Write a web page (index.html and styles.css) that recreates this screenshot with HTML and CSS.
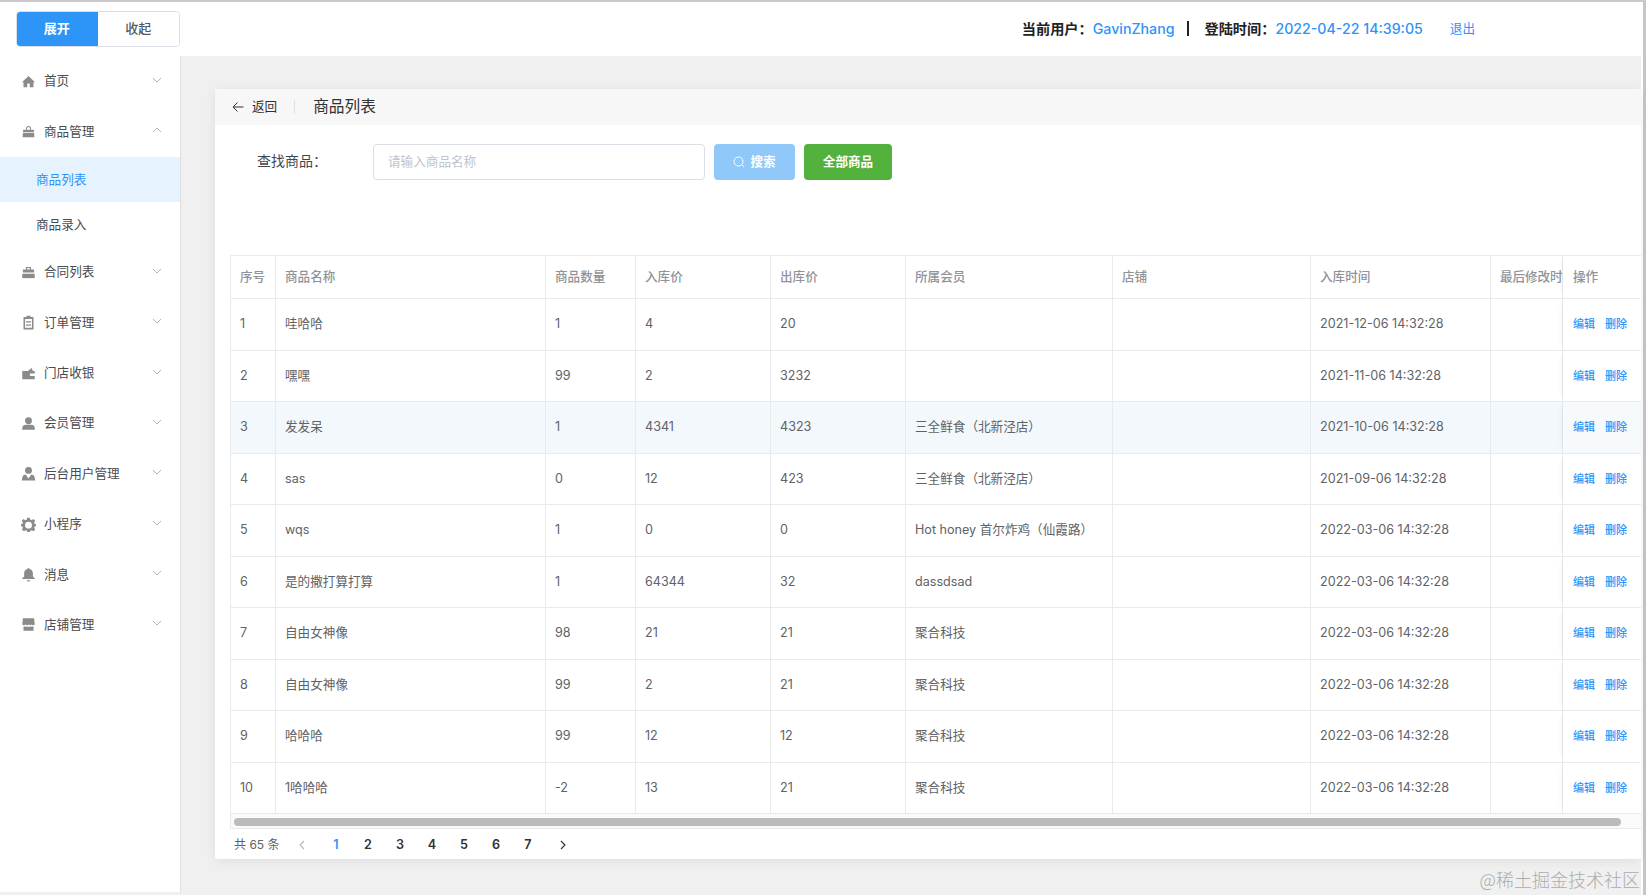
FILE: index.html
```html
<!DOCTYPE html>
<html lang="zh-CN">
<head>
<meta charset="utf-8">
<title>商品列表</title>
<link rel="stylesheet" href="styles.css">
</head>
<body>
<div class="window">
  <header class="topbar">
    <div class="toggle"><button class="toggle-btn on">展开</button><button class="toggle-btn">收起</button></div>
    <div class="userinfo">
      <span class="ui-label">当前用户：</span><span class="ui-value">GavinZhang</span>
      <span class="ui-sep"></span>
      <span class="ui-label">登陆时间：</span><span class="ui-value">2022-04-22 14:39:05</span>
      <a class="ui-logout">退出</a>
    </div>
  </header>
  <div class="layout">
    <nav class="sidebar">
      <div class="menu-item"><svg class="mi" viewBox="0 0 24 24"><path d="M12 3 1.500 13H4v8h6v-6h4v6h6v-8h2.500z"/></svg><span>首页</span><svg class="chev" viewBox="0 0 10 6"><path d="M1 1l4 4 4-4"/></svg></div>
      <div class="menu-item"><svg class="mi" viewBox="0 0 24 24"><path d="M8 9V7a4 4 0 0 1 8 0v2h-1.600V7a2.400 2.400 0 0 0-4.800 0v2z"/><path d="M3.500 9h17l1 12h-19zM3.200 13v1.400h17.600V13z" fill-rule="evenodd"/></svg><span>商品管理</span><svg class="chev" viewBox="0 0 10 6"><path d="M1 5l4-4 4 4"/></svg></div>
      <div class="submenu">
        <div class="sub-item active">商品列表</div>
        <div class="sub-item">商品录入</div>
      </div>
      <div class="menu-item"><svg class="mi" viewBox="0 0 24 24"><path fill-rule="evenodd" d="M8 3h8v4h5v5H3V7h5zm2 1.800V7h4V4.800z"/><path d="M2 14h20v7H2z"/></svg><span>合同列表</span><svg class="chev" viewBox="0 0 10 6"><path d="M1 1l4 4 4-4"/></svg></div>
      <div class="menu-item"><svg class="mi" viewBox="0 0 24 24"><path fill-rule="evenodd" d="M9 1h6v2h5v20H4V3h5zM6.500 6.500v14h11v-14zM8 10h8v2H8zm0 5h8v2H8z"/></svg><span>订单管理</span><svg class="chev" viewBox="0 0 10 6"><path d="M1 1l4 4 4-4"/></svg></div>
      <div class="menu-item"><svg class="mi" viewBox="0 0 24 24"><path fill-rule="evenodd" d="M2 8h9l6-5 2 5h3v4h-6a2 2 0 0 0 0 4h6v5H2z"/></svg><span>门店收银</span><svg class="chev" viewBox="0 0 10 6"><path d="M1 1l4 4 4-4"/></svg></div>
      <div class="menu-item"><svg class="mi" viewBox="0 0 24 24"><circle cx="12" cy="7.500" r="5.500"/><path d="M2 22v-3c0-3 3-5 6-5h8c3 0 6 2 6 5v3z"/></svg><span>会员管理</span><svg class="chev" viewBox="0 0 10 6"><path d="M1 1l4 4 4-4"/></svg></div>
      <div class="menu-item"><svg class="mi" viewBox="0 0 24 24"><circle cx="12" cy="7" r="5.500"/><path d="M1 23l1.500-6c.6-2 2.500-3.500 5-3.500L12 20l4.500-6.500c2.500 0 4.400 1.500 5 3.500l1.500 6z"/></svg><span>后台用户管理</span><svg class="chev" viewBox="0 0 10 6"><path d="M1 1l4 4 4-4"/></svg></div>
      <div class="menu-item"><svg class="mi" viewBox="0 0 24 24"><path fill-rule="evenodd" d="M10 1h4l.7 3 2.300 1 2.800-1.800 2.800 2.800L21 8.800l1 2.200 2 .5v3l-2 .5-1 2.200 1.800 2.800-2.800 2.800-2.800-1.800-2.300 1-.7 2h-4l-.7-2-2.300-1-2.800 1.800-2.800-2.800L3 17.200l-1-2.200-2-.5v-3l2-.5 1-2.200-1.800-2.800L4 3.200 6.800 5 9.300 4zM12 7.500a5.500 5.500 0 1 0 0 11 5.500 5.500 0 0 0 0-11z"/></svg><span>小程序</span><svg class="chev" viewBox="0 0 10 6"><path d="M1 1l4 4 4-4"/></svg></div>
      <div class="menu-item"><svg class="mi" viewBox="0 0 24 24"><path d="M10.500 3a1.500 1.500 0 0 1 3 0c3.500.8 5.500 3.500 5.500 7v5l3 3v1H2v-1l3-3v-5c0-3.500 2-6.200 5.500-7zM9 21h6a3 2 0 0 1-6 0z"/></svg><span>消息</span><svg class="chev" viewBox="0 0 10 6"><path d="M1 1l4 4 4-4"/></svg></div>
      <div class="menu-item"><svg class="mi" viewBox="0 0 24 24"><path d="M3 2h18l1 10c-2 2-4 1-5 0-1.500 1.500-3.500 1.500-5 0-1.500 1.500-3.500 1.500-5 0-1 1-3 2-5 0z"/><path d="M4 15c1 .5 2.500.5 3.500 0 1.500 1 3 1 4.500 0 1.500 1 3 1 4.500 0 1 .5 2.500.5 3.500 0v7H4z"/></svg><span>店铺管理</span><svg class="chev" viewBox="0 0 10 6"><path d="M1 1l4 4 4-4"/></svg></div>
    </nav>
    <main class="main">
      <section class="card">
        <div class="page-head">
          <svg class="back-arrow" viewBox="0 0 12 12"><path d="M11.500 6H1M5.500 1.500 1 6l4.500 4.500"/></svg>
          <span class="back-text">返回</span>
          <span class="head-div"></span>
          <span class="head-title">商品列表</span>
        </div>
        <div class="search">
          <label class="search-label">查找商品：</label>
          <input class="search-input" placeholder="请输入商品名称">
          <button class="btn btn-search"><svg class="search-ico" viewBox="0 0 12 12"><circle cx="5.500" cy="5.500" r="4.500"/><path d="M9 9l2 2"/></svg>搜索</button>
          <button class="btn btn-all">全部商品</button>
        </div>
        <div class="table-wrap">
          <table class="table">
            <thead>
              <tr><th>序号</th><th>商品名称</th><th>商品数量</th><th>入库价</th><th>出库价</th><th>所属会员</th><th>店铺</th><th>入库时间</th><th class="tight">最后修改时</th><th class="fix">操作</th></tr>
            </thead>
            <tbody>
              <tr><td>1</td><td>哇哈哈</td><td>1</td><td>4</td><td>20</td><td></td><td></td><td>2021-12-06 14:32:28</td><td></td><td class="fix"><a>编辑</a><a>删除</a></td></tr>
              <tr><td>2</td><td>嘿嘿</td><td>99</td><td>2</td><td>3232</td><td></td><td></td><td>2021-11-06 14:32:28</td><td></td><td class="fix"><a>编辑</a><a>删除</a></td></tr>
              <tr class="hover"><td>3</td><td>发发呆</td><td>1</td><td>4341</td><td>4323</td><td>三全鲜食（北新泾店）</td><td></td><td>2021-10-06 14:32:28</td><td></td><td class="fix"><a>编辑</a><a>删除</a></td></tr>
              <tr><td>4</td><td>sas</td><td>0</td><td>12</td><td>423</td><td>三全鲜食（北新泾店）</td><td></td><td>2021-09-06 14:32:28</td><td></td><td class="fix"><a>编辑</a><a>删除</a></td></tr>
              <tr><td>5</td><td>wqs</td><td>1</td><td>0</td><td>0</td><td>Hot honey 首尔炸鸡（仙霞路）</td><td></td><td>2022-03-06 14:32:28</td><td></td><td class="fix"><a>编辑</a><a>删除</a></td></tr>
              <tr><td>6</td><td>是的撒打算打算</td><td>1</td><td>64344</td><td>32</td><td>dassdsad</td><td></td><td>2022-03-06 14:32:28</td><td></td><td class="fix"><a>编辑</a><a>删除</a></td></tr>
              <tr><td>7</td><td>自由女神像</td><td>98</td><td>21</td><td>21</td><td>聚合科技</td><td></td><td>2022-03-06 14:32:28</td><td></td><td class="fix"><a>编辑</a><a>删除</a></td></tr>
              <tr><td>8</td><td>自由女神像</td><td>99</td><td>2</td><td>21</td><td>聚合科技</td><td></td><td>2022-03-06 14:32:28</td><td></td><td class="fix"><a>编辑</a><a>删除</a></td></tr>
              <tr><td>9</td><td>哈哈哈</td><td>99</td><td>12</td><td>12</td><td>聚合科技</td><td></td><td>2022-03-06 14:32:28</td><td></td><td class="fix"><a>编辑</a><a>删除</a></td></tr>
              <tr><td>10</td><td>1哈哈哈</td><td>-2</td><td>13</td><td>21</td><td>聚合科技</td><td></td><td>2022-03-06 14:32:28</td><td></td><td class="fix"><a>编辑</a><a>删除</a></td></tr>
            </tbody>
          </table>
          <div class="hscroll"><div class="hthumb"></div></div>
        </div>
        <div class="pager">
          <span class="total">共 65 条</span>
          <svg class="pg-arrow prev" viewBox="0 0 6 10"><path d="M5 1 1 5l4 4"/></svg>
          <ul class="pages"><li class="cur">1</li><li>2</li><li>3</li><li>4</li><li>5</li><li>6</li><li>7</li></ul>
          <svg class="pg-arrow next" viewBox="0 0 6 10"><path d="M1 1l4 4-4 4"/></svg>
        </div>
      </section>
    </main>
  </div>
</div>
<div class="watermark">@稀土掘金技术社区</div>
</body>
</html>
```
FILE: styles.css
```css
* { box-sizing: border-box; }
html, body { margin: 0; height: 895px; overflow: hidden; }
body {
  background: #f0f0f0;
  font-family: Inter, "Liberation Sans", "Noto Sans CJK SC", sans-serif;
  font-size: 12.6px;
  line-height: 16px;
  color: #606266;
}
.window {
  height: 895px;
  border-top: 2px solid #c9c9cb;
  border-right: 3px solid #c6c6c8;
  padding-right: 2px;
  background: #fff;
}
.topbar { height: 54px; display: flex; align-items: flex-start; }
.toggle {
  margin: 9px 0 0 16px;
  width: 164px;
  height: 36px;
  display: flex;
  border: 1px solid #dcdfe6;
  border-radius: 4px;
  overflow: hidden;
}
.toggle-btn {
  flex: 1;
  border: 0;
  background: #fff;
  color: #55585e;
  font: 500 13px/16px Inter, "Noto Sans CJK SC", sans-serif;
  padding: 0 0 2px;
}
.toggle-btn.on { background: #2d95f8; color: #fff; font-weight: 600; margin: -1px 0 -1px -1px; }
.userinfo {
  margin: 16px 166px 0 auto;
  height: 21px;
  display: flex;
  align-items: center;
  font-size: 14.2px;
  font-weight: 500;
  color: #222;
}
.ui-label { font-weight: 600; }
.ui-value { color: #2d95f8; }
.ui-sep { width: 2px; height: 15px; background: #222; margin: 0 15px 0 13px; }
.ui-logout { color: #2d95f8; font-size: 12.6px; margin-left: 27px; font-weight: 400; }
.layout { display: flex; height: 839px; background: #f0f0f0; }
.sidebar {
  flex: none;
  width: 181px;
  height: 836px;
  background: #fff;
  border-right: 1px solid #dedfe2;
}
.menu-item {
  height: 50.4px;
  display: flex;
  align-items: center;
  padding-left: 21px;
  color: #4a4c50;
}
.menu-item span { margin-left: 8px; }
.mi { width: 15px; height: 15px; fill: #8b8b8b; flex: none; }
.chev {
  width: 10px;
  height: 6px;
  margin: -3px 18px 0 auto;
  fill: none;
  stroke: #b4b4b4;
  stroke-width: 1;
}
.sub-item { height: 45.15px; line-height: 45px; padding-left: 36px; color: #4a4c50; }
.sub-item.active { background: #e6f3fe; color: #2d95f8; }
.main { flex: 1; padding: 33px 0 0 34px; min-width: 0; }
.card {
  height: 770px;
  background: #fff;
  border-radius: 2px;
  box-shadow: 0 2px 12px rgba(0, 0, 0, .08);
}
.page-head {
  height: 36px;
  background: #f7f7f7;
  display: flex;
  align-items: center;
  padding-left: 17px;
  color: #303133;
}
.back-arrow { width: 12px; height: 12px; fill: none; stroke: #303133; stroke-width: 1; }
.back-text { margin-left: 8px; }
.head-div { width: 1px; height: 14px; background: #dcdfe6; margin: 0 18px 0 17px; }
.head-title { font-size: 15.7px; }
.search { display: flex; align-items: center; height: 36px; margin: 19px 0 75px; padding-left: 42px; }
.search-label { width: 116px; margin-top: -2px; font-size: 14px; color: #45474b; }
.search-input {
  width: 332px;
  height: 36px;
  border: 1px solid #dcdfe6;
  border-radius: 4px;
  padding: 0 14px 2px;
  font: 12.6px/16px Inter, "Noto Sans CJK SC", sans-serif;
  outline: 0;
}
.search-input::placeholder { color: #c0c4cc; }
.btn {
  height: 36px;
  border: 0;
  border-radius: 4px;
  color: #fff;
  font: 600 12.6px/16px Inter, "Noto Sans CJK SC", sans-serif;
  padding: 0;
  display: flex;
  align-items: center;
  justify-content: center;
}
.btn-search { width: 81px; margin-left: 9px; background: #8fc8f9; }
.search-ico { width: 12px; height: 12px; margin-right: 5px; fill: none; stroke: #fff; stroke-width: 1; }
.btn-all { width: 88px; margin-left: 9px; background: #53b23e; }
.table-wrap { margin-left: 15px; border: 1px solid #e8eaec; border-right: 0; }
.table { display: block; border-collapse: collapse; }
.table thead, .table tbody { display: block; }
.table tr {
  display: grid;
  grid-template-columns: 45px 270px 90px 135px 135px 207px 198px 180px 72px 77px;
  height: 51.5px;
  border-bottom: 1px solid #e8eaec;
}
.table thead tr { height: 43px; }
.table tr.hover { background: #f3f8fc; }
.table th, .table td {
  display: flex;
  align-items: center;
  padding: 0 0 0 9px;
  border-right: 1px solid #e8eaec;
  white-space: nowrap;
  overflow: hidden;
  font-weight: 400;
}
.table th { color: #909399; font-weight: 500; }
.table th.tight { letter-spacing: -.1px; }
.table .fix {
  border-right: 0;
  padding-left: 10px;
  position: relative;
  background: #fff;
  box-shadow: -4px 0 6px -4px rgba(0, 0, 0, .07);
  clip-path: inset(0 0 0 -8px);
}
.table tr.hover .fix { background: #f7fafd; }
.fix a { color: #2d95f8; font-size: 11px; font-weight: 500; margin-right: 10px; }
.hscroll { height: 14px; padding: 4px 20px 2px 3px; background: #fafafa; }
.hthumb { height: 8px; background: #bbb; border-radius: 4px; }
.pager { height: 30px; display: flex; align-items: center; padding: 1px 0 0 19px; }
.total { width: 65px; font-size: 12px; color: #606266; }
.pg-arrow { width: 6px; height: 10px; fill: none; stroke-width: 1.100; flex: none; }
.prev { stroke: #b4b6bb; }
.next { stroke: #303133; margin-left: 16px; }
.pages { list-style: none; margin: 0 0 0 15px; padding: 0; display: flex; }
.pages li { width: 32px; text-align: center; font-weight: 600; color: #303133; }
.pages li.cur { color: #2d95f8; }
.watermark {
  position: absolute;
  right: 6px;
  top: 866px;
  font: 300 18px "Noto Sans CJK SC", sans-serif;
  color: #acacac;
}
```
